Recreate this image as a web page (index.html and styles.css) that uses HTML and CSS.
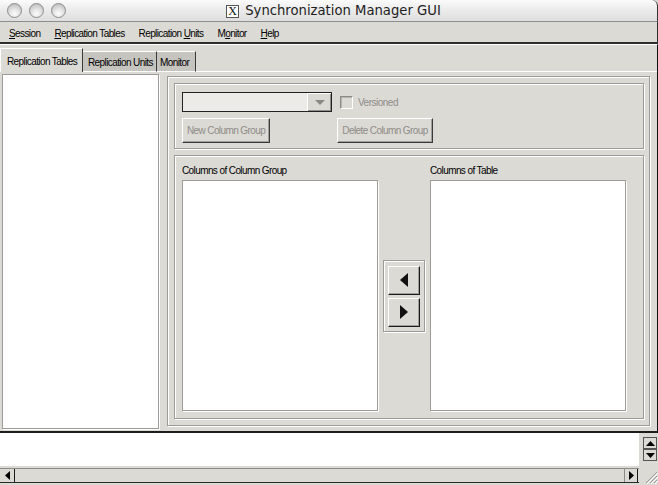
FILE: index.html
```html
<!DOCTYPE html>
<html>
<head>
<meta charset="utf-8">
<link rel="stylesheet" href="styles.css">
</head>
<body>
<div class="window">
  <div class="titlebar">
    <div class="lights"><span class="light"></span><span class="light"></span><span class="light"></span></div>
    <div class="title"><span class="xicon">X</span><span>Synchronization Manager GUI</span></div>
    <div></div>
  </div>
  <div class="menubar">
    <span class="menu"><u>S</u>ession</span>
    <span class="menu"><u>R</u>eplication Tables</span>
    <span class="menu">Replication <u>U</u>nits</span>
    <span class="menu">M<u>o</u>nitor</span>
    <span class="menu"><u>H</u>elp</span>
  </div>
  <div class="main">
    <div class="tabstrip">
      <div class="tab active">Replication Tables</div>
      <div class="tab">Replication Units</div>
      <div class="tab">Monitor</div>
      <div class="tabfill"></div>
    </div>
    <div class="tabcontent">
      <div class="tree"></div>
      <div class="outer">
        <div class="group upper">
          <div class="row1">
            <div class="combo"><div class="combofield"></div><div class="combobtn"><svg width="10" height="6" viewBox="0 0 10 6"><polygon points="0,0 10,0 5,5" fill="#8a8985"/></svg></div></div>
            <div class="check"></div>
            <span class="dis">Versioned</span>
          </div>
          <div class="row2">
            <div class="btn dis b1">New Column Group</div>
            <div class="btn dis b2">Delete Column Group</div>
          </div>
        </div>
        <div class="group lower">
          <div class="lbl">Columns of Column Group</div>
          <div></div>
          <div class="lbl">Columns of Table</div>
          <div class="list"></div>
          <div class="arrows">
            <div class="abtn"><svg width="8" height="14" viewBox="0 0 8 14"><polygon points="8,0 8,14 0,7" fill="#111"/></svg></div>
            <div class="abtn"><svg width="8" height="14" viewBox="0 0 8 14"><polygon points="0,0 0,14 8,7" fill="#111"/></svg></div>
          </div>
          <div class="list"></div>
        </div>
      </div>
    </div>
  </div>
  <div class="console">
    <div class="text"></div>
    <div class="vscroll">
      <div class="sbtn"><svg width="9" height="5" viewBox="0 0 9 5"><polygon points="0,5 9,5 4.5,0" fill="#000"/></svg></div>
      <div class="sbtn"><svg width="9" height="5" viewBox="0 0 9 5"><polygon points="0,0 9,0 4.5,5" fill="#000"/></svg></div>
    </div>
  </div>
  <div class="bottom">
    <div class="hscroll">
      <div class="hbtn left"><svg width="5" height="9" viewBox="0 0 5 9"><polygon points="5,0 5,9 0,4.5" fill="#000"/></svg></div>
      <div class="track"></div>
      <div class="hbtn right"><svg width="5" height="9" viewBox="0 0 5 9"><polygon points="0,0 0,9 5,4.5" fill="#000"/></svg></div>
    </div>
    <div class="grip"><svg width="14" height="14" viewBox="0 0 14 14"><path d="M13 2 L2 13 M13 6 L6 13 M13 10 L10 13" stroke="#9a9a9a" stroke-width="1"/><path d="M14 3 L3 14 M14 7 L7 14 M14 11 L11 14" stroke="#fff" stroke-width="1"/></svg></div>
  </div>
</div>
</body>
</html>
```
FILE: styles.css
```css
* { box-sizing: border-box; }
html, body { margin: 0; padding: 0; }
body { width: 658px; height: 485px; overflow: hidden; background: #dcdad5; font-family: "Liberation Sans", Arial, sans-serif; }
.window { width: 658px; height: 485px; display: flex; flex-direction: column; background: #dcdad5; }

.titlebar { height: 22px; display: grid; grid-template-columns: 1fr auto 1fr; align-items: center;
  background: linear-gradient(#fbfbfb, #ececec 45%, #dedede); border-bottom: 1px solid #8e8e8e;
  border-right: 1px solid #333; border-top-right-radius: 6px; }
.lights { display: flex; gap: 7px; padding-left: 7px; }
.light { width: 15px; height: 15px; border-radius: 50%; border: 1px solid #8c8c8c;
  background: radial-gradient(circle at 50% 75%, #fdfdfd 0, #e4e4e4 40%, #b4b4b4 100%); }
.title { display: flex; align-items: center; gap: 6px; padding-left: 10px; font-family: "DejaVu Sans", sans-serif; font-size: 13.2px; color: #1e1e1e; white-space: nowrap; }
.xicon { width: 13px; height: 13px; border: 1px solid #555; background: #fff; font-family: "Liberation Serif", serif; font-size: 12px; line-height: 11px; text-align: center; color: #111; margin-top: 2px; }

.menubar { height: 22px; display: flex; align-items: center; gap: 14px; padding-left: 9px; padding-top: 2px;
  border-bottom: 2px solid #2e2e2e; border-right: 1px solid #2e2e2e; font-size: 10px; letter-spacing: -0.6px; color: #000; }
.menu u { text-decoration: underline; text-underline-offset: 1px; }

.main { border-top: 1px solid #fff; border-right: 1px solid #111; padding-top: 3px; }
.tabstrip { display: flex; align-items: flex-end; height: 24px; font-size: 10px; letter-spacing: -0.6px; }
.tab { height: 21px; padding: 5px 0 0 5px; background: #c6c4bf; border-top: 1px solid #fff; border-left: 1px solid #fff;
  border-right: 1px solid #3a3a3a; border-bottom: 1px solid #fff; white-space: nowrap; overflow: hidden; }
.tab.active { height: 24px; width: 83px; padding: 7px 0 0 6px; background: #dcdad5; border-bottom: none; }
.tab:nth-child(2) { width: 74px; border-left: none; }
.tab:nth-child(3) { width: 39px; padding-left: 3px; border-left: none; }
.tabfill { flex: 1; border-bottom: 1px solid #fff; }

.tabcontent { height: 359px; display: flex; align-items: flex-start; padding: 2px 7px 0 2px; }
.tree { width: 157px; height: 355px; background: #fff; border: 1px solid #9d9b97; box-shadow: 1px 1px 0 #fff; }
.outer { width: 483px; height: 350px; margin: 2px 0 0 8px; padding: 6px 5px 6px 6px; border: 1px solid #9d9b97;
  box-shadow: inset 1px 1px 0 #fff, 1px 1px 0 #fff; display: flex; flex-direction: column; gap: 6px; }
.group { border: 1px solid #9d9b97; box-shadow: inset 1px 1px 0 #fff, 1px 1px 0 #fff; }
.upper { height: 66px; padding: 8px 0 0 7px; display: flex; flex-direction: column; gap: 6px; }
.row1 { display: flex; align-items: center; height: 20px; font-size: 10px; letter-spacing: -0.5px; }
.combo { width: 150px; height: 20px; display: flex; border: 1px solid #222; }
.combofield { flex: 1; background: #edebe7; }
.combobtn { width: 24px; display: flex; align-items: center; justify-content: center; background: #dcdad5;
  border-left: 1px solid #fff; border-top: 1px solid #fff; box-shadow: inset -1px -1px 0 #8e8c88; }
.check { width: 13px; height: 13px; margin-left: 8px; border: 1px solid #8c8a86; border-right-color: #fff; border-bottom-color: #fff; box-shadow: inset 1px 1px 0 #b8b6b1; }
.row1 .dis { margin-left: 5px; }
.dis { color: #8e8c88; }
.row2 { display: flex; height: 25px; }
.btn { height: 25px; display: flex; align-items: center; justify-content: center; font-size: 10px; letter-spacing: -0.6px;
  border: 1px solid; border-color: #fff #3a3a3a #3a3a3a #fff; box-shadow: inset -1px -1px 0 #a19f9b; white-space: nowrap; }
.b1 { width: 88px; }
.b2 { width: 96px; margin-left: 67px; }

.lower { height: 264px; padding: 7px 0 0 7px; display: grid; grid-template-columns: 196px 42px 196px; grid-template-rows: 17px 231px; column-gap: 5px; }
.lbl { font-size: 10px; letter-spacing: -0.6px; color: #000; padding-top: 2px; }
.list { background: #fff; border: 1px solid #9d9b97; box-shadow: 1px 1px 0 #fff; }
.arrows { align-self: center; height: 72px; border: 1px solid #9d9b97; box-shadow: inset 1px 1px 0 #fff, 1px 1px 0 #fff;
  padding: 5px 4px 0 4px; display: flex; flex-direction: column; gap: 3px; }
.abtn { height: 29px; display: flex; align-items: center; justify-content: center; border: 1px solid; border-color: #fff #1a1a1a #1a1a1a #fff; box-shadow: inset -1px -1px 0 #a19f9b; }

.console { height: 35px; display: flex; border-top: 2px solid #1c1c1c; }
.text { flex: 1; background: #fff; }
.vscroll { width: 19px; padding: 4px 0 0 4px; display: flex; flex-direction: column; }
.sbtn { width: 14px; height: 12px; display: flex; align-items: center; justify-content: center; border: 1px solid #1a1a1a; border-top-color: #fff; border-left-color: #fff; background: #dcdad5; outline: 1px solid #555; outline-offset: -1px; }

.bottom { height: 18px; display: flex; padding-top: 2px; }
.hscroll { width: 639px; height: 15px; display: flex; border-top: 1px solid #8e8c88; border-bottom: 1px solid #2a2a2a; }
.hbtn { width: 14px; display: flex; align-items: center; justify-content: center; }
.hbtn.left { margin-left: 1px; border-right: 1px solid #1a1a1a; }
.hbtn.right { border-left: 1px solid #8e8c88; border-right: 1px solid #1a1a1a; margin-right: 1px; }
.track { flex: 1; }
.grip { width: 19px; display: flex; align-items: flex-end; justify-content: flex-end; padding-left: 5px; }
```
